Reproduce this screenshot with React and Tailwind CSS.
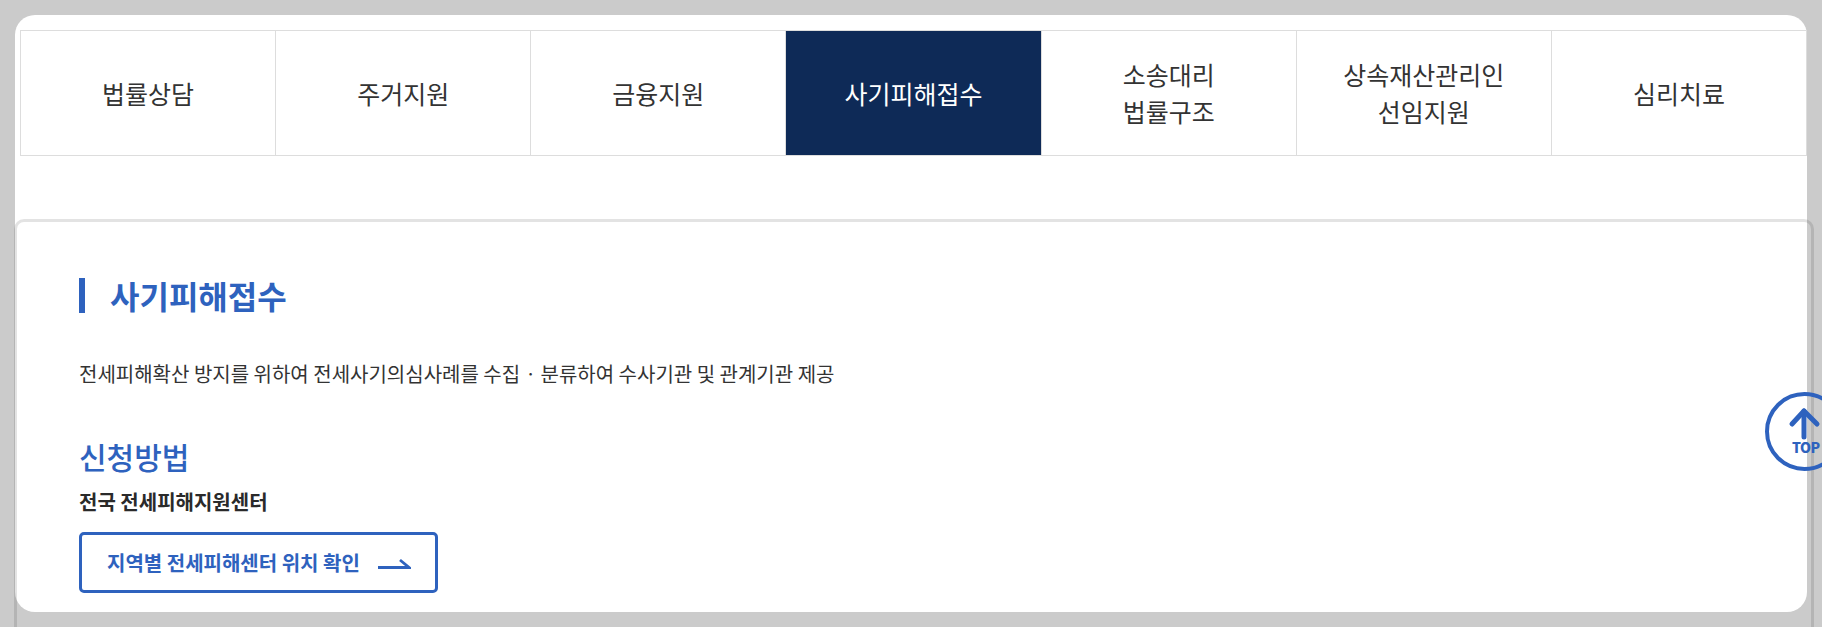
const tabs = [
  ['법률상담'],
  ['주거지원'],
  ['금융지원'],
  ['사기피해접수'],
  ['소송대리', '법률구조'],
  ['상속재산관리인', '선임지원'],
  ['심리치료'],
];

const ACTIVE = '사기피해접수';

function TopButton() {
  return (
    <a className="absolute left-[1765px] top-[392px] block size-[79px]" href="#top">
      <svg viewBox="0 0 79 79" className="size-[79px]" fill="none" stroke="#2e62be">
        <circle cx="39.5" cy="39.5" r="37.5" strokeWidth="4" />
        <path d="M39 19v26" strokeWidth="5" strokeLinecap="round" />
        <path d="M27 32 39 19l13 13" strokeWidth="5" strokeLinecap="round" strokeLinejoin="round" />
      </svg>
      <span className="absolute left-[27px] top-[46px] text-[14px] leading-[18px] font-black tracking-[-0.5px] text-[#2e62be]">TOP</span>
    </a>
  );
}

export default function App() {
  return (
    <div className="relative h-[627px] w-full overflow-hidden bg-[#cbcbcb] pt-[15px] pl-[15px] font-['Noto_Sans_CJK_KR','Noto_Sans',sans-serif] text-[#333]">
      <div className="h-[597px] w-[1792px] rounded-[20px] bg-white pt-[15px]">
        {/* tabs */}
        <ul className="ml-[5px] grid h-[126px] w-[1787px] grid-cols-7 border-y border-l border-[#dddddd]">
          {tabs.map(lines => {
            const on = lines[0] === ACTIVE;
            return (
              <li
                key={lines[0]}
                className={`flex items-center justify-center border-r border-[#dddddd] text-center text-[25px] leading-[37px] ${on ? 'bg-[#0e2a57] text-white' : ''}`}
              >
                <span>
                  {lines.map(l => (
                    <span key={l} className="block">{l}</span>
                  ))}
                </span>
              </li>
            );
          })}
        </ul>

        {/* content card */}
        <div className="mt-[63px] -ml-px h-[500px] w-[1800px] rounded-[10px] border-[3px] border-black/11 pt-[56px] pl-[62px]">
          <h2 className="h-[35px] border-l-[6px] border-[#2e62be] pl-[25px] text-[32px] leading-[35px] font-bold text-[#2e62be]">
            사기피해접수
          </h2>
          <p className="mt-[46px] text-[20px] leading-[30px]">
            전세피해확산 방지를 위하여 전세사기의심사례를 수집<span className="mx-px">ㆍ</span>분류하여 수사기관 및 관계기관 제공
          </p>
          <h3 className="mt-[47px] text-[30px] leading-[40px] font-medium text-[#2e62be]">신청방법</h3>
          <p className="mt-[11px] text-[20px] leading-[30px] font-bold text-[#2a2a2a]">전국 전세피해지원센터</p>
          <a
            href="#map"
            className="mt-[15px] flex h-[61px] w-[359px] items-center rounded-[5px] border-[3px] border-[#2e62be] pt-[1px] pl-[25px] text-[20px] font-bold text-[#2e62be]"
          >
            지역별 전세피해센터 위치 확인
            <svg viewBox="0 0 33 11" className="ml-[18px] h-[11px] w-[33px]" fill="none" stroke="#2e62be" strokeWidth="2.8">
              <path d="M0 9.5h31L22 2" />
            </svg>
          </a>
        </div>
      </div>
      <TopButton />
    </div>
  );
}
